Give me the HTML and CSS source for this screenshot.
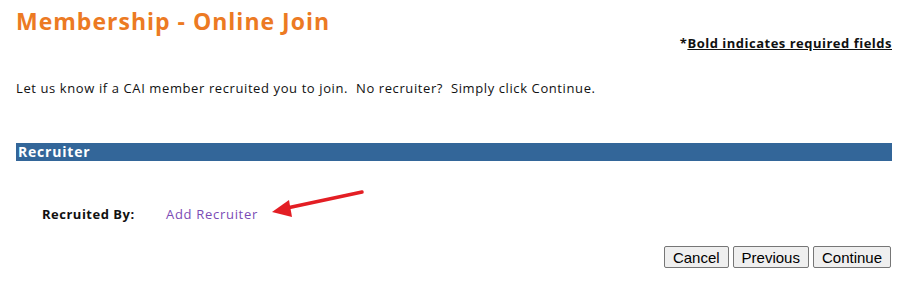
FILE: index.html
```html
<!DOCTYPE html>
<html>
<head>
<meta charset="utf-8">
<link rel="stylesheet" href="styles.css">
</head>
<body>
<div class="page">
  <h1 class="title">Membership - Online Join</h1>
  <div class="required">*<u>Bold indicates required fields</u></div>
  <p class="intro">Let us know if a CAI member recruited you to join.&nbsp; No recruiter?&nbsp; Simply click Continue.</p>
  <div class="section-bar">Recruiter</div>
  <div class="field-row">
    <span class="field-label">Recruited By:</span>
    <a class="field-link" href="#">Add Recruiter</a>
    <svg class="arrow" width="100" height="34" viewBox="0 0 100 34">
      <line x1="95" y1="6" x2="20" y2="22" stroke="#e31e24" stroke-width="3.5" stroke-linecap="round"/>
      <polygon points="5,26 22,14 25,31" fill="#e31e24"/>
    </svg>
  </div>
  <div class="actions">
    <button class="btn">Cancel</button>
    <button class="btn">Previous</button>
    <button class="btn">Continue</button>
  </div>
</div>
</body>
</html>
```
FILE: styles.css
```css
html, body {
  margin: 0;
  padding: 0;
  background: #ffffff;
}
body {
  font-family: "Open Sans", "DejaVu Sans", sans-serif;
  color: #111;
}
.page {
  padding: 7px 13px 0 16px;
}
.title {
  margin: 0;
  font-size: 23px;
  line-height: 28px;
  font-weight: 700;
  letter-spacing: 1px;
  color: #ec7a23;
}
.required {
  text-align: right;
  font-size: 13px;
  font-weight: 700;
  line-height: 18px;
  letter-spacing: 0.5px;
  margin-top: -1px;
}
.intro {
  margin: 27px 0 0 0;
  font-size: 13px;
  line-height: 18px;
  letter-spacing: 0.6px;
}
.section-bar {
  margin-top: 46px;
  background: #336699;
  color: #fff;
  font-weight: 700;
  font-size: 14px;
  line-height: 18px;
  letter-spacing: 0.8px;
  padding-left: 2px;
}
.field-row {
  position: relative;
  display: flex;
  align-items: center;
  margin-top: 44px;
  padding-left: 26px;
  font-size: 13px;
  line-height: 18px;
}
.field-label {
  font-weight: 700;
  width: 124px;
  letter-spacing: 0.5px;
}
.field-link {
  color: #7b4bb5;
  text-decoration: none;
  letter-spacing: 0.7px;
}
.arrow {
  position: absolute;
  left: 251px;
  top: -19px;
}
.actions {
  display: flex;
  justify-content: flex-end;
  gap: 4px;
  margin-top: 23px;
  padding-right: 1px;
}
.btn {
  font-family: "Liberation Sans", Arial, sans-serif;
  font-size: 15px;
  padding: 1px 8px;
  height: 22px;
  background: #efefef;
  border: 1px solid #767676;
  border-radius: 2px;
  color: #000;
}
```
